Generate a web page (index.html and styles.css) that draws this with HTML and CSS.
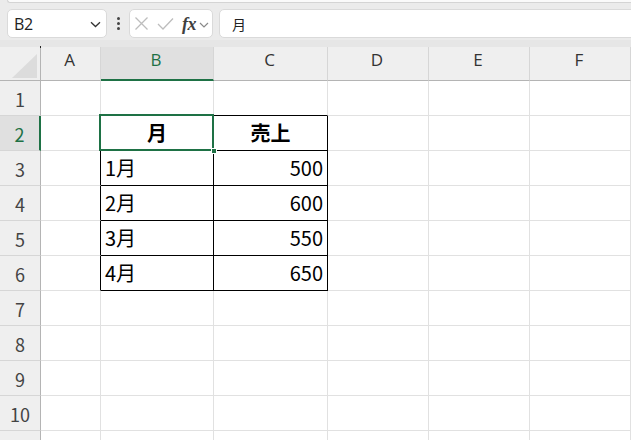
FILE: index.html
```html
<!DOCTYPE html>
<html lang="ja">
<head>
<meta charset="utf-8">
<link rel="stylesheet" href="styles.css">
</head>
<body>
<div class="top">
  <div class="ribbon-edge"></div>
  <div class="fbar">
    <div class="namebox">
      <span class="ref">B2</span>
      <svg class="chev" width="11" height="7" viewBox="0 0 11 7"><path d="M1 1.2 L5.5 5.5 L10 1.2" fill="none" stroke="#333" stroke-width="1.3"/></svg>
    </div>
    <div class="dots"><span></span><span></span><span></span></div>
    <div class="fnbox">
      <svg class="ico" width="15" height="15" viewBox="0 0 15 15"><path d="M1.5 1.5 L13.5 13.5 M13.5 1.5 L1.5 13.5" stroke="#bdbdbd" stroke-width="1.3" fill="none"/></svg>
      <svg class="ico" width="17" height="14" viewBox="0 0 17 14"><path d="M1 7 L6 12 L16 1.5" stroke="#bdbdbd" stroke-width="1.3" fill="none"/></svg>
      <span class="fx">fx</span>
      <svg class="chev2" width="10" height="6" viewBox="0 0 10 6"><path d="M1 1 L5 5 L9 1" fill="none" stroke="#8a8a8a" stroke-width="1.2"/></svg>
    </div>
    <div class="finput"><span>月</span></div>
  </div>
</div>
<div class="band"></div>
<div class="sheet">
  <div class="corner"><svg width="27" height="26" viewBox="0 0 27 26"><path d="M26 1 L26 25 L1 25 Z" fill="#dcdcdc"/></svg><i class="dot"></i></div>
  <div class="ch">A</div><div class="ch sel">B</div><div class="ch">C</div><div class="ch">D</div><div class="ch">E</div><div class="ch">F</div>

  <div class="rh">1</div><div class="c"></div><div class="c tt"></div><div class="c tt"></div><div class="c"></div><div class="c"></div><div class="c"></div>
  <div class="rh rsel">2</div><div class="c tl"></div><div class="c t hd active">月<span class="selbox"></span><span class="handle"></span></div><div class="c t hd">売上</div><div class="c"></div><div class="c"></div><div class="c"></div>
  <div class="rh">3</div><div class="c tl"></div><div class="c t">1月</div><div class="c t num">500</div><div class="c"></div><div class="c"></div><div class="c"></div>
  <div class="rh">4</div><div class="c tl"></div><div class="c t">2月</div><div class="c t num">600</div><div class="c"></div><div class="c"></div><div class="c"></div>
  <div class="rh">5</div><div class="c tl"></div><div class="c t">3月</div><div class="c t num">550</div><div class="c"></div><div class="c"></div><div class="c"></div>
  <div class="rh">6</div><div class="c tl"></div><div class="c t">4月</div><div class="c t num">650</div><div class="c"></div><div class="c"></div><div class="c"></div>
  <div class="rh">7</div><div class="c"></div><div class="c"></div><div class="c"></div><div class="c"></div><div class="c"></div><div class="c"></div>
  <div class="rh">8</div><div class="c"></div><div class="c"></div><div class="c"></div><div class="c"></div><div class="c"></div><div class="c"></div>
  <div class="rh">9</div><div class="c"></div><div class="c"></div><div class="c"></div><div class="c"></div><div class="c"></div><div class="c"></div>
  <div class="rh">10</div><div class="c"></div><div class="c"></div><div class="c"></div><div class="c"></div><div class="c"></div><div class="c"></div>
  <div class="rh"></div><div class="c"></div><div class="c"></div><div class="c"></div><div class="c"></div><div class="c"></div><div class="c"></div>
</div>
</body>
</html>
```
FILE: styles.css
```css
* { box-sizing: border-box; }
html, body { margin: 0; padding: 0; }
body {
  width: 631px;
  height: 440px;
  overflow: hidden;
  background: #ffffff;
  font-family: "Noto Sans CJK JP", "Noto Sans", sans-serif;
  color: #000;
}
.top {
  background: #ebebeb;
  height: 40px;
}
.ribbon-edge {
  height: 3px;
  margin-left: 7px;
  background: #fafafa;
  border-bottom: 1px solid #d4d4d4;
  border-left: 1px solid #d4d4d4;
  border-bottom-left-radius: 4px;
}
.fbar {
  display: flex;
  align-items: stretch;
  height: 30px;
  margin-top: 6px;
  padding-left: 7px;
}
.namebox {
  width: 100px;
  height: 29px;
  background: #fff;
  border: 1px solid #dadada;
  border-radius: 5px;
  display: flex;
  align-items: center;
  justify-content: space-between;
  padding: 0 5px 0 6px;
}
.ref {
  font-family: "Open Sans", "Noto Sans", sans-serif;
  font-size: 16px;
  color: #222;
  letter-spacing: -0.3px;
}
.chev { margin-top: 1px; }
.dots {
  width: 22px;
  display: flex;
  flex-direction: column;
  align-items: center;
  justify-content: center;
  gap: 2px;
  padding-bottom: 1px;
}
.dots span {
  width: 3px;
  height: 3px;
  border-radius: 50%;
  background: #444;
}
.fnbox {
  width: 84px;
  height: 29px;
  background: #fff;
  border: 1px solid #dadada;
  border-radius: 5px;
  display: flex;
  align-items: center;
  padding-left: 4px;
}
.fnbox .ico:first-child { margin-right: 8px; }
.fx {
  font-family: "Liberation Serif", "DejaVu Serif", serif;
  font-style: italic;
  font-weight: bold;
  font-size: 18px;
  color: #404040;
  margin-left: 8px;
  letter-spacing: -0.5px;
  line-height: 1;
}
.chev2 { margin-left: 3px; margin-top: 2px; }
.finput {
  flex: 1;
  height: 29px;
  margin-left: 6px;
  margin-right: -8px;
  background: #fff;
  border: 1px solid #dadada;
  border-radius: 5px;
  display: flex;
  align-items: center;
  padding-left: 12px;
  font-size: 14px;
  color: #222;
}
.band {
  height: 7px;
  background: #e6e6e6;
}
.sheet {
  display: grid;
  grid-template-columns: 41px 60px 113px 114px 101px 101px 101px;
  grid-template-rows: 34px repeat(11, 35px);
}
.corner {
  position: relative;
  background: #efefef;
  border-right: 1px solid #b4b4b4;
  border-bottom: 1px solid #b4b4b4;
  padding: 6px 0 0 11px;
}
.corner svg { display: block; }
.dot {
  position: absolute;
  right: -1px;
  top: -1px;
  width: 1px;
  height: 2px;
  background: #222;
}
.ch {
  background: #efefef;
  border-right: 1px solid #d6d6d6;
  border-bottom: 1px solid #b4b4b4;
  display: flex;
  justify-content: center;
  align-items: flex-start;
  padding-top: 1px;
  padding-right: 2px;
  font-family: "Open Sans", "Noto Sans", sans-serif;
  font-size: 17px;
  color: #333;
}
.ch.sel {
  background: #e0e0e0;
  color: #1e7145;
  border-bottom: 2px solid #1e7145;
}
.rh {
  background: #efefef;
  border-right: 1px solid #b4b4b4;
  border-bottom: 1px solid #d6d6d6;
  display: flex;
  justify-content: center;
  align-items: center;
  padding-top: 2px;
  font-size: 18px;
  color: #444;
}
.rh.rsel {
  background: #e0e0e0;
  color: #1e7145;
  border-right: 2px solid #1e7145;
}
.c {
  border-right: 1px solid #e1e1e1;
  border-bottom: 1px solid #e1e1e1;
  display: flex;
  align-items: center;
  padding: 0 4px 1px 4px;
  font-size: 20px;
  color: #000;
}
.c.tt { border-bottom-color: #000; }
.c.tl { border-right-color: #000; }
.c.t { border-right-color: #000; border-bottom-color: #000; }
.c.hd { justify-content: center; font-weight: bold; }
.c.num { justify-content: flex-end; padding-right: 4px; }
.active { position: relative; }
.selbox {
  position: absolute;
  left: -2px;
  top: -2px;
  right: -1px;
  bottom: -1px;
  border: 2px solid #1e7145;
}
.handle {
  position: absolute;
  right: -4px;
  bottom: -4px;
  width: 6px;
  height: 6px;
  background: #1e7145;
  border: 1px solid #fff;
}
```
